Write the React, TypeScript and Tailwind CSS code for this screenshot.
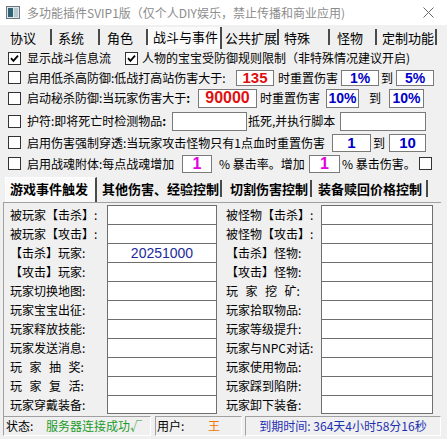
import React from "react";

function Check({ checked = false }: { checked?: boolean }) {
  return (
    <span className="inline-flex h-[13px] w-[13px] shrink-0 items-center justify-center border border-[#333333] bg-white">
      {checked && (
        <svg width="9" height="9" viewBox="0 0 9 9">
          <path d="M1 4.2 L3.4 6.8 L8 1.6" stroke="#000" strokeWidth="1.8" fill="none" />
        </svg>
      )}
    </span>
  );
}

function Tab({ label, cls, selected = false }: { label: string; cls: string; selected?: boolean }) {
  return (
    <div
      className={
        "flex shrink-0 items-center whitespace-nowrap text-[13px] " +
        cls +
        (selected
          ? " h-[22px] self-start bg-[#fafafa] pb-[4px] border-l border-l-white"
          : " h-[16px] border-r-2 border-r-[#4a4a4a]")
      }
    >
      {label}
    </div>
  );
}

function SubTab({ label, cls, selected = false }: { label: string; cls: string; selected?: boolean }) {
  return (
    <div
      className={
        "flex shrink-0 items-center whitespace-nowrap text-[13px] font-bold " +
        cls +
        (selected
          ? " h-[25px] bg-[#fafafa] border-t border-l border-white pb-[4px]"
          : " h-[17px] mt-[3px] border-r-2 border-r-[#4a4a4a]")
      }
    >
      {label}
    </div>
  );
}

const leftRows: React.ReactNode[] = [
  "被玩家【击杀】:",
  "被玩家【攻击】:",
  "【击杀】玩家:",
  "【攻击】玩家:",
  "玩家切换地图:",
  "玩家宝宝出征:",
  "玩家释放技能:",
  "玩家发送消息:",
  <span key="a"><span className="tracking-[7.5px]">玩家抽</span>奖:</span>,
  <span key="b"><span className="tracking-[7.5px]">玩家复</span>活:</span>,
  "玩家穿戴装备:",
];

const rightRows: React.ReactNode[] = [
  "被怪物【击杀】:",
  "被怪物【攻击】:",
  "【击杀】怪物:",
  "【攻击】怪物:",
  <span key="c"><span className="tracking-[7.5px]">玩家挖</span>矿:</span>,
  "玩家拾取物品:",
  "玩家等级提升:",
  "玩家与NPC对话:",
  "玩家使用物品:",
  "玩家踩到陷阱:",
  "玩家卸下装备:",
];

export default function App() {
  return (
    <div className="relative h-[439px] w-[447px] overflow-hidden bg-[#f0f0f0] font-['Noto_Sans_CJK_SC',sans-serif] text-[12px] leading-none text-black">
      {/* title bar */}
      <div className="flex h-[25px] items-center bg-white">
        <svg className="ml-[6px] shrink-0" width="14" height="13" viewBox="0 0 14 13">
          <rect x="0.5" y="0.5" width="13" height="12" fill="#dfe6ea" stroke="#6b7780" />
          <rect x="2" y="2" width="5" height="9" fill="#2f6272" />
          <rect x="8" y="2" width="4" height="9" fill="#b9c7cf" />
        </svg>
        <span className="ml-[7px] whitespace-nowrap text-[12px] text-[#8c8c8c]">
          多功能插件SVIP1版（仅个人DIY娱乐，禁止传播和商业应用)
        </span>
        <svg className="ml-auto mr-[13px] shrink-0" width="11" height="11" viewBox="0 0 11 11">
          <path d="M0.5 0.5 L10.5 10.5 M10.5 0.5 L0.5 10.5" stroke="#666" strokeWidth="1" />
        </svg>
      </div>

      {/* main tabs */}
      <div className="flex h-[22px] items-center pl-[3px] pt-[2px]">
        <Tab label="协议" cls="w-[49px] pl-[7px]" />
        <Tab label="系统" cls="w-[48px] pl-[6px]" />
        <Tab label="角色" cls="w-[48px] pl-[7px]" />
        <Tab label="战斗与事件" cls="w-[74px] pl-[4px] border-r-2 border-r-[#4a4a4a]" selected />
        <Tab label="公共扩展" cls="w-[57px] pl-[3px]" />
        <Tab label="特殊" cls="w-[51px] pl-[5px]" />
        <Tab label="怪物" cls="w-[47px] pl-[7px]" />
        <Tab label="定制功能" cls="w-[60px] pl-[5px]" />
      </div>

      {/* option rows */}
      <div className="flex h-[21px] items-center pl-[8px] pt-[1px]">
        <Check checked />
        <span className="ml-[6px] w-[98px] whitespace-nowrap">显示战斗信息流</span>
        <Check checked />
        <span className="ml-[4px] whitespace-nowrap">人物的宝宝受防御规则限制（非特殊情况建议开启)</span>
      </div>

      <div className="flex h-[19px] items-center pl-[8px]">
        <Check />
        <span className="ml-[6px] w-[209px] whitespace-nowrap">启用低杀高防御:低战打高站伤害大于:</span>
        <div className="flex h-[16px] w-[38px] shrink-0 items-center justify-center border border-[#7a7a7a] bg-white font-['Liberation_Sans',sans-serif] text-[15px] font-bold text-[#e01010]">135</div>
        <span className="w-[67px] whitespace-nowrap pl-[4px]">时重置伤害</span>
        <div className="flex h-[16px] w-[38px] shrink-0 items-center justify-center border border-[#7a7a7a] bg-white font-['Liberation_Sans',sans-serif] text-[14px] font-bold text-[#0000c8]">1%</div>
        <span className="w-[17px] whitespace-nowrap pl-[2px]">到</span>
        <div className="flex h-[16px] w-[38px] shrink-0 items-center justify-center border border-[#7a7a7a] bg-white font-['Liberation_Sans',sans-serif] text-[14px] font-bold text-[#0000c8]">5%</div>
      </div>

      <div className="flex h-[22px] items-center pl-[8px]">
        <Check />
        <span className="ml-[6px] w-[171px] whitespace-nowrap">启动秘杀防御:当玩家伤害大于<b>:</b></span>
        <div className="flex h-[19px] w-[59px] shrink-0 items-center justify-center border border-[#7a7a7a] bg-white font-['Liberation_Sans',sans-serif] text-[16px] font-bold text-[#e01010]">90000</div>
        <span className="w-[69px] whitespace-nowrap pl-[3px]">时重置伤害</span>
        <div className="flex h-[19px] w-[33px] shrink-0 items-center justify-center border border-[#7a7a7a] bg-white font-['Liberation_Sans',sans-serif] text-[14px] font-bold text-[#0000c8]">10%</div>
        <span className="w-[30px] whitespace-nowrap pl-[10px]">到</span>
        <div className="flex h-[19px] w-[35px] shrink-0 items-center justify-center border border-[#7a7a7a] bg-white font-['Liberation_Sans',sans-serif] text-[14px] font-bold text-[#0000c8]">10%</div>
      </div>

      <div className="flex h-[24px] items-center pl-[8px]">
        <Check />
        <span className="ml-[6px] w-[145px] whitespace-nowrap">护符:即将死亡时检测物品<b>:</b></span>
        <div className="h-[19px] w-[75px] shrink-0 border border-[#7a7a7a] bg-white" />
        <span className="w-[93px] whitespace-nowrap pl-[1px]">抵死,并执行脚本</span>
        <div className="h-[19px] w-[86px] shrink-0 border border-[#7a7a7a] bg-white" />
      </div>

      <div className="flex h-[19px] items-center pl-[8px]">
        <Check />
        <span className="ml-[6px] w-[305px] whitespace-nowrap">启用伤害强制穿透:当玩家攻击怪物只有1点血时重置伤害</span>
        <div className="flex h-[18px] w-[39px] shrink-0 items-center justify-center border border-[#7a7a7a] bg-white font-['Liberation_Sans',sans-serif] text-[15px] font-bold text-[#0000c8]">1</div>
        <span className="w-[18px] whitespace-nowrap pl-[2px]">到</span>
        <div className="flex h-[18px] w-[37px] shrink-0 items-center justify-center border border-[#7a7a7a] bg-white font-['Liberation_Sans',sans-serif] text-[15px] font-bold text-[#0000c8]">10</div>
      </div>

      <div className="flex h-[23px] items-center pl-[8px]">
        <Check />
        <span className="ml-[6px] w-[155px] whitespace-nowrap">启用战魂附体:每点战魂增加</span>
        <div className="flex h-[18px] w-[30px] shrink-0 items-center justify-center border border-[#7a7a7a] bg-white font-['Liberation_Sans',sans-serif] text-[16px] font-bold text-[#e000e0]">1</div>
        <span className="w-[97px] whitespace-nowrap pl-[7px]">% 暴击率。增加</span>
        <div className="flex h-[18px] w-[31px] shrink-0 items-center justify-center border border-[#7a7a7a] bg-white font-['Liberation_Sans',sans-serif] text-[16px] font-bold text-[#e000e0]">1</div>
        <span className="w-[79px] whitespace-nowrap pl-[2px]">% 暴击伤害。</span>
        <Check />
      </div>

      {/* sub tabs */}
      <div className="flex h-[27px] items-start pl-[5px] pt-[2px]">
        <SubTab label="游戏事件触发" cls="w-[92px] pl-[4px] border-r-2 border-r-[#4a4a4a]" selected />
        <SubTab label="其他伤害、经验控制" cls="w-[125px] pl-[5px]" />
        <SubTab label="切割伤害控制" cls="w-[90px] pl-[8px]" />
        <SubTab label="装备赎回价格控制" cls="w-[116px] pl-[6px]" />
      </div>

      {/* event panel */}
      <div className="ml-[3px] flex h-[214px] w-[438px] border-l border-t border-[#a0a0a0] pt-[2px]">
        <div className="flex flex-col">
          {leftRows.map((l, i) => (
            <div key={i} className="flex h-[19px] shrink-0">
              <div className="flex w-[103px] items-center whitespace-nowrap pl-[6px]">{l}</div>
              <div
                className={
                  "flex w-[110px] items-center justify-center border-x border-t border-[#6e6e6e] bg-white font-['Liberation_Sans',sans-serif] text-[14px] text-[#1c2a9c]" +
                  (i === leftRows.length - 1 ? " h-[19px] border-b" : " h-[19px]")
                }
              >
                {i === 2 ? "20251000" : ""}
              </div>
            </div>
          ))}
        </div>
        <div className="ml-[9px] flex flex-col">
          {rightRows.map((l, i) => (
            <div key={i} className="flex h-[19px] shrink-0">
              <div className="flex w-[95px] items-center whitespace-nowrap">{l}</div>
              <div
                className={
                  "w-[112px] border-x border-t border-[#6e6e6e] bg-white" +
                  (i === rightRows.length - 1 ? " h-[19px] border-b" : " h-[19px]")
                }
              />
            </div>
          ))}
        </div>
      </div>

      {/* status bar */}
      <div className="flex h-[20px]">
        <div className="ml-[3px] flex w-[148px] items-center whitespace-nowrap border border-b-white border-l-[#a0a0a0] border-r-white border-t-[#a0a0a0] pl-[2px]">
          <span className="w-[40px]">状态:</span>
          <span className="text-[#1f9a2a]">服务器连接成功√</span>
        </div>
        <div className="ml-[4px] flex w-[87px] items-center whitespace-nowrap border border-b-white border-l-[#a0a0a0] border-r-white border-t-[#a0a0a0] pl-[1px]">
          <span className="w-[51px]">用户:</span>
          <span className="text-[#f07800]">王</span>
        </div>
        <div className="ml-[3px] flex w-[196px] items-center justify-center whitespace-nowrap border border-b-white border-l-[#a0a0a0] border-r-white border-t-[#a0a0a0] text-[#1e30b0]">
          到期时间: 364天4小时58分16秒
        </div>
      </div>
    </div>
  );
}
